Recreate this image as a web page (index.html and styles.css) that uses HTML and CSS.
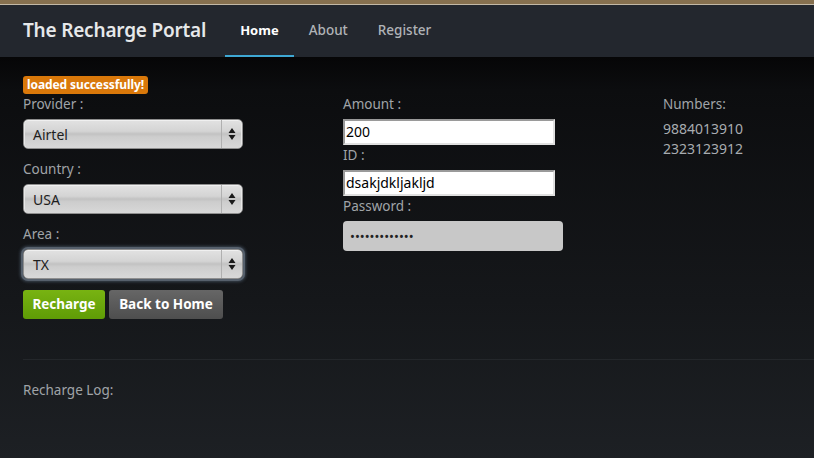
FILE: index.html
```html
<!DOCTYPE html>
<html>
<head>
<meta charset="utf-8">
<title>The Recharge Portal</title>
<link rel="stylesheet" href="styles.css">
</head>
<body>
<div class="topstrip"></div>
<header class="navbar">
  <div class="brand">The Recharge Portal</div>
  <nav class="nav">
    <a class="nav-link active">Home</a>
    <a class="nav-link">About</a>
    <a class="nav-link">Register</a>
  </nav>
</header>
<main class="container">
  <div class="badge">loaded successfully!</div>
  <div class="row">
    <div class="col">
      <label class="lbl">Provider :</label>
      <div class="select"><span class="sel-text">Airtel</span><span class="sel-arrow"><svg width="8" height="14" viewBox="0 0 8 14"><path d="M4 1 L7.5 6 H0.5 Z M4 13 L7.5 8 H0.5 Z" fill="#1a1a1a"/></svg></span></div>
      <label class="lbl">Country :</label>
      <div class="select"><span class="sel-text">USA</span><span class="sel-arrow"><svg width="8" height="14" viewBox="0 0 8 14"><path d="M4 1 L7.5 6 H0.5 Z M4 13 L7.5 8 H0.5 Z" fill="#1a1a1a"/></svg></span></div>
      <label class="lbl">Area :</label>
      <div class="select focus"><span class="sel-text">TX</span><span class="sel-arrow"><svg width="8" height="14" viewBox="0 0 8 14"><path d="M4 1 L7.5 6 H0.5 Z M4 13 L7.5 8 H0.5 Z" fill="#1a1a1a"/></svg></span></div>
      <div class="buttons">
        <button class="btn btn-green">Recharge</button>
        <button class="btn btn-grey">Back to Home</button>
      </div>
    </div>
    <div class="col">
      <label class="lbl">Amount :</label>
      <div class="input">200</div>
      <label class="lbl">ID :</label>
      <div class="input">dsakjdkljakljd</div>
      <label class="lbl">Password :</label>
      <div class="input pwd">•••••••••••••</div>
    </div>
    <div class="col last">
      <label class="lbl">Numbers:</label>
      <div class="num">9884013910</div>
      <div class="num">2323123912</div>
    </div>
  </div>
  <hr class="rule">
  <div class="log">Recharge Log:</div>
</main>
</body>
</html>
```
FILE: styles.css
```css
html, body {
  margin: 0;
  padding: 0;
}
body {
  width: 814px;
  height: 458px;
  overflow: hidden;
  font-family: "Noto Sans", "Open Sans", "DejaVu Sans", sans-serif;
  font-size: 14px;
  background: linear-gradient(to bottom, #060607 0px, #060607 57px, #0c0d0f 90px, #15171a 300px, #1d2024 458px);
  color: #a0a4a8;
}
.topstrip {
  height: 4px;
  background: #86704f;
  border-bottom: 1px solid #c2b8a6;
}
.navbar {
  height: 52px;
  background: #23272e;
  display: flex;
  align-items: stretch;
  padding-left: 23px;
  box-sizing: border-box;
}
.brand {
  font-size: 19px;
  font-weight: 600;
  color: #e6e8ea;
  line-height: 50px;
  margin-right: 19px;
  letter-spacing: -0.2px;
}
.nav {
  display: flex;
}
.nav-link {
  display: block;
  padding: 0 15px;
  line-height: 50px;
  color: #b0b3b7;
  font-size: 13.5px;
  font-weight: 500;
  border-bottom: 2px solid transparent;
}
.nav-link.active {
  color: #ffffff;
  font-weight: 700;
  font-size: 13px;
  border-bottom-color: #3ea8d4;
}
.container {
  padding: 19px 0 0 23px;
}
.badge {
  display: block;
  width: fit-content;
  background: #d9780a;
  color: #fff;
  font-size: 12px;
  font-weight: 700;
  line-height: 18px;
  height: 18px;
  padding: 0 4px;
  border-radius: 3px;
  letter-spacing: -0.1px;
}
.row {
  display: flex;
}
.col {
  width: 320px;
  display: flex;
  flex-direction: column;
  align-items: flex-start;
}
.col.last {
  width: auto;
  flex: 1;
}
.lbl {
  display: block;
  line-height: 20px;
  height: 20px;
  margin-bottom: 5px;
  font-size: 13.5px;
  color: #a0a4a8;
}
.select + .lbl {
  margin-top: 10px;
}
.select {
  width: 220px;
  height: 30px;
  box-sizing: border-box;
  border-radius: 5px;
  border: 1px solid #8e8e8e;
  background: linear-gradient(to bottom, #e2e2e2 0%, #d4d4d4 40%, #c2c2c2 50%, #cdcdcd 60%, #d8d8d8 100%);
  box-shadow: inset 0 1px 0 #f0f0f0, inset 1px 0 0 #e8e8e8, inset -1px 0 0 #e8e8e8;
  display: flex;
  align-items: center;
}
.select.focus {
  box-shadow: 0 0 0 2px #56606c, 0 0 3px 3px #3a4450, inset 0 1px 0 #f0f0f0;
}
.sel-text {
  padding-left: 9px;
  color: #1e1e1e;
  font-size: 14px;
  flex: 1;
}
.sel-arrow {
  width: 20px;
  height: 100%;
  border-left: 1px solid #b0b0b0;
  display: flex;
  align-items: center;
  justify-content: center;
}
.buttons {
  display: flex;
  gap: 4px;
  margin-top: 11px;
}
.btn {
  font-family: "Noto Sans", "Open Sans", "DejaVu Sans", sans-serif;
  font-size: 13.5px;
  font-weight: 700;
  color: #fff;
  height: 29px;
  border: none;
  border-radius: 3px;
  padding: 0;
  line-height: 29px;
}
.btn-green {
  width: 82px;
  background: linear-gradient(to bottom, #78b312, #5f9c06);
}
.btn-grey {
  width: 114px;
  background: linear-gradient(to bottom, #666666, #4e4e4e);
}
.input {
  width: 212px;
  height: 26px;
  box-sizing: border-box;
  background: #fff;
  border-top: 2px solid #9a9a9a;
  border-left: 2px solid #9a9a9a;
  border-right: 2px solid #e0e0e0;
  border-bottom: 2px solid #e0e0e0;
  color: #000;
  font-size: 14px;
  line-height: 22px;
  padding-left: 1px;
}
.input.pwd {
  width: 220px;
  height: 30px;
  background: #c8c8c8;
  border: none;
  border-radius: 4px;
  line-height: 30px;
  padding-left: 7px;
  font-size: 13px;
  color: #222;
}
.num {
  line-height: 20px;
  color: #a8acb0;
}
.rule {
  border: none;
  border-top: 1px solid #24272b;
  margin: 40px 0 0 0;
}
.log {
  margin-top: 20px;
  line-height: 20px;
  font-size: 13.5px;
  color: #a0a4a8;
}
```
